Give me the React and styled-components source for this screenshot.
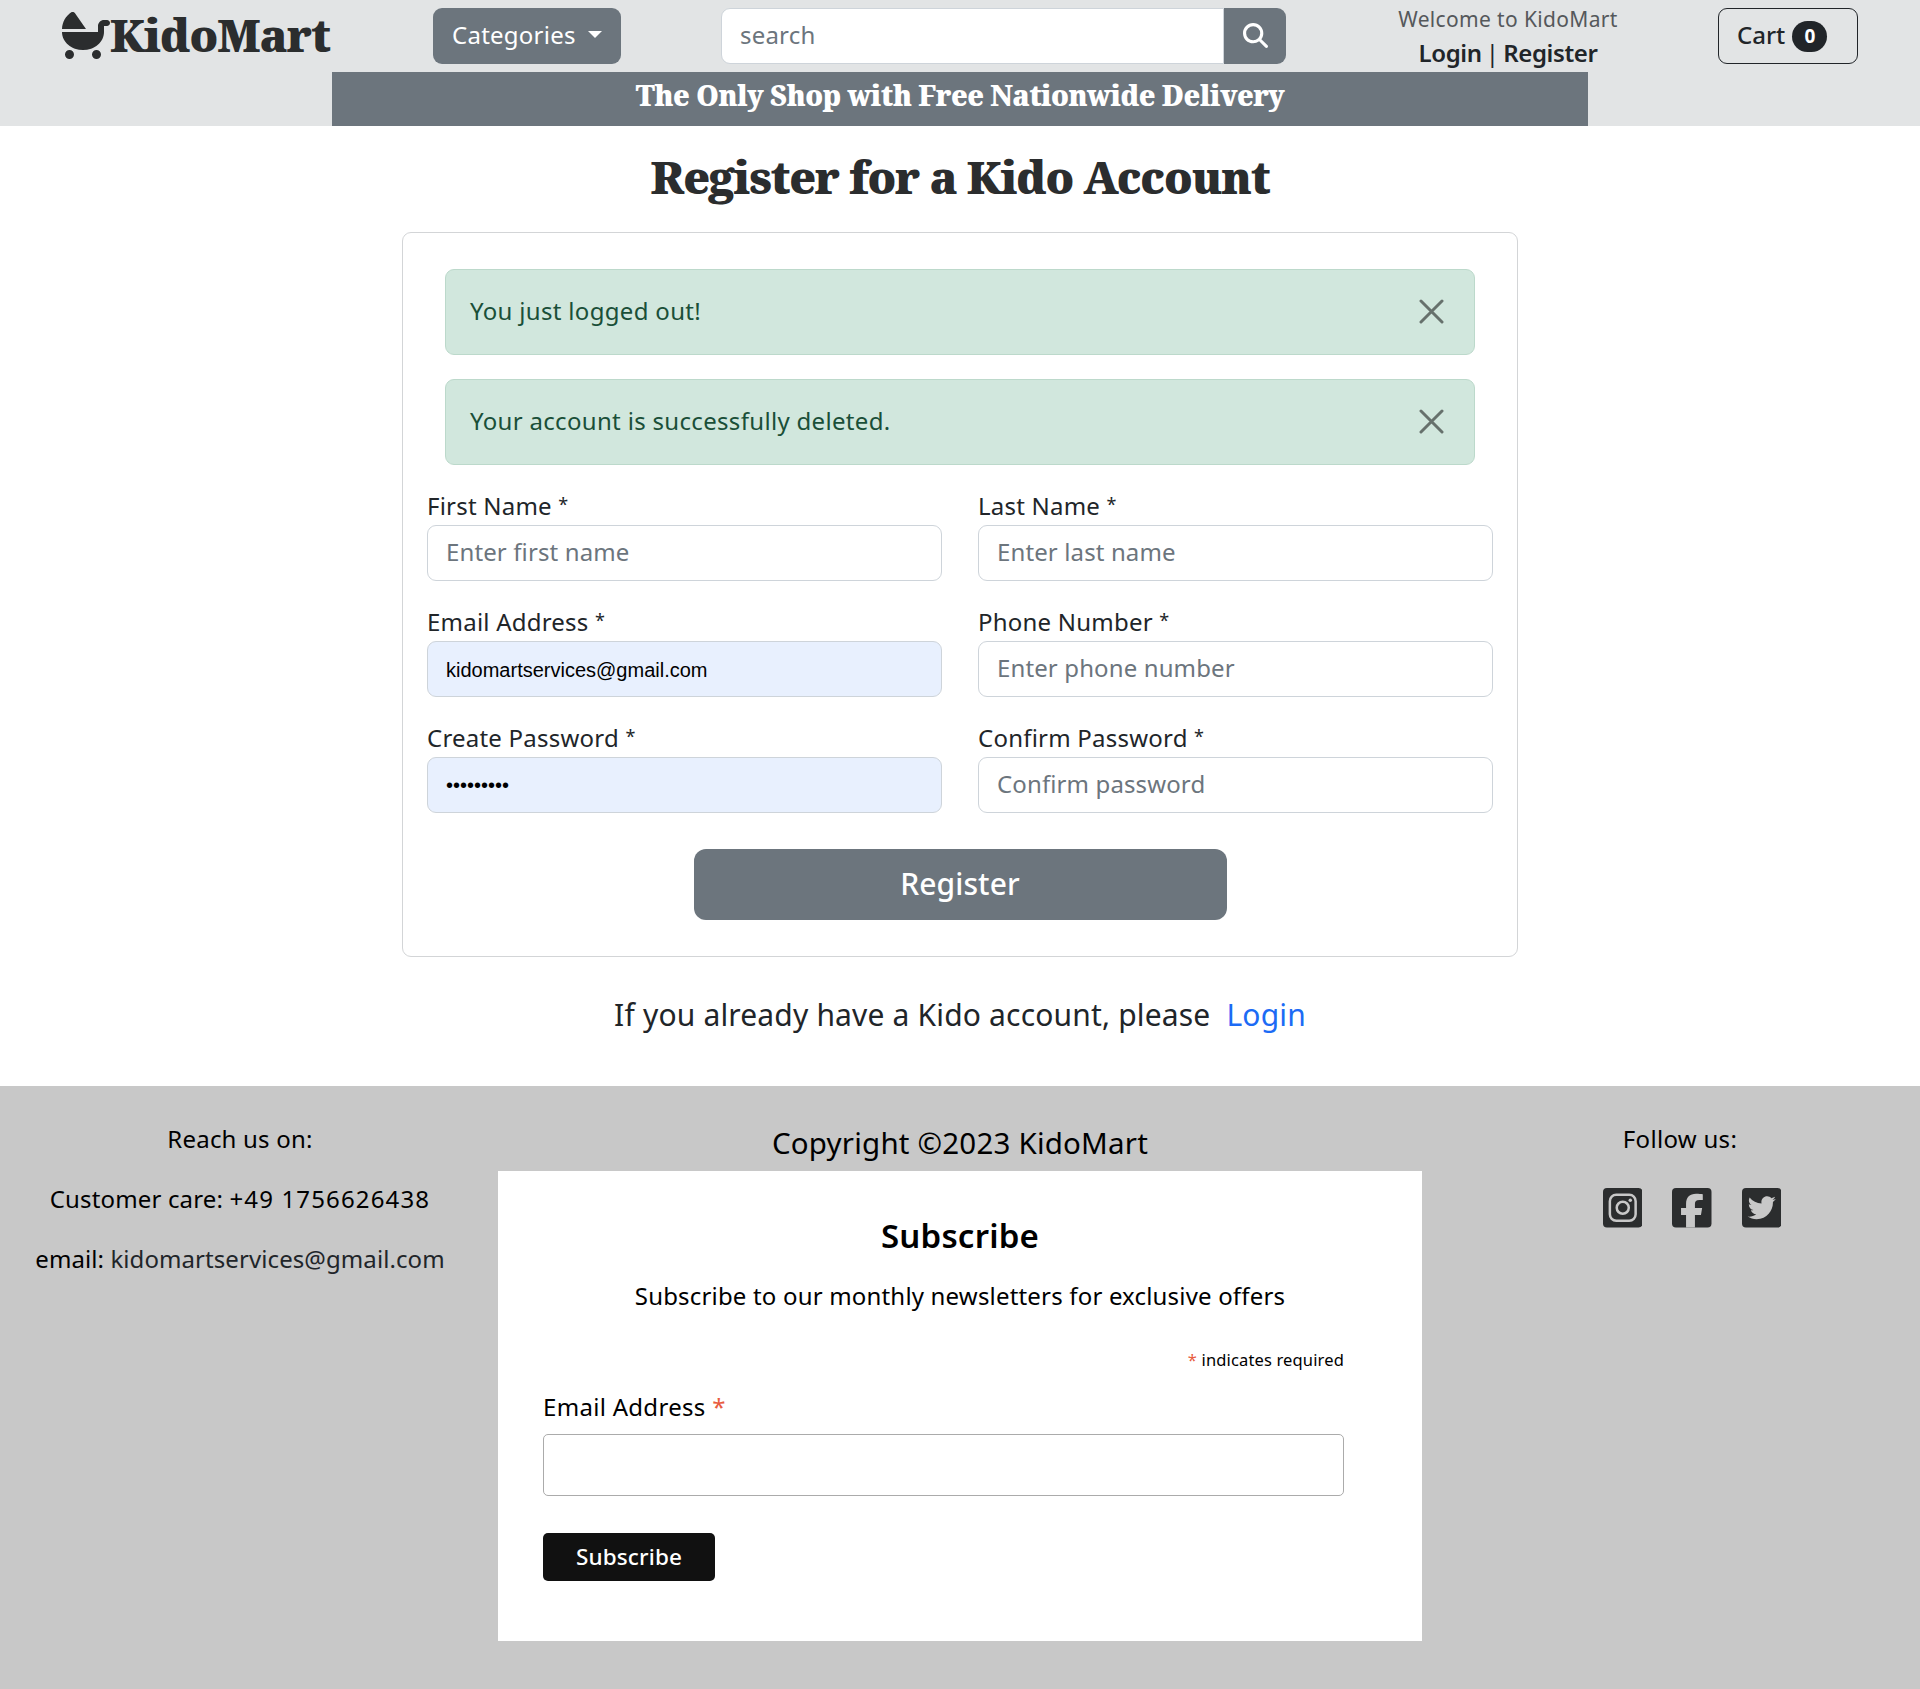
import React from "react";
import styled, { createGlobalStyle } from "styled-components";
import { FaBabyCarriage, FaMagnifyingGlass } from "react-icons/fa6";

const sans = `"Noto Sans", "Open Sans", sans-serif`;
const slab = `"Noto Serif", "DejaVu Serif", serif`;
const slate = "#6c757d";
const ink = "#212529";
const charcoal = "#2b2d2e";
const footerGrey = "#c8c8c8";

const GlobalStyle = createGlobalStyle`
  *, *::before, *::after { box-sizing: border-box; }
  body {
    margin: 0;
    font-family: ${sans};
    font-size: 24px;
    line-height: 36px;
    color: ${ink};
    background: #fff;
  }
  a { color: inherit; text-decoration: none; }
  p, h1, h2, h3 { margin: 0; }
  input, button { font-family: inherit; outline: none; }
`;

const Page = styled.div`
  min-height: 1689px;
  display: flex;
  flex-direction: column;
`;

/* ---------- header ---------- */

const Header = styled.header`
  height: 126px;
  background: #e2e4e5;
`;

const NavRow = styled.div`
  display: flex;
  align-items: flex-start;
  height: 72px;
  padding: 0 62px;
`;

const Brand = styled.a`
  display: flex;
  width: 371px;
  height: 72px;
  padding-top: 11px;
  color: ${charcoal};
  svg {
    width: 48px;
    height: 48px;
    flex: none;
  }
`;

const BrandName = styled.span`
  font: 900 45px/47px ${slab};
  letter-spacing: -1px;
`;

const CategoriesButton = styled.button`
  display: flex;
  align-items: center;
  width: 188px;
  height: 56px;
  margin: 8px 100px 0 0;
  padding: 0 0 3px 19px;
  border: 0;
  border-radius: 9px;
  background: ${slate};
  color: #fff;
  font-size: 24px;
  letter-spacing: 0.25px;
  &::after {
    content: "";
    margin: 0 0 0 12px;
    border: 7px solid transparent;
    border-top-color: #fff;
    border-bottom: 0;
  }
`;

const SearchGroup = styled.form`
  display: flex;
  width: 565px;
  height: 56px;
  margin-top: 8px;
`;

const SearchInput = styled.input`
  flex: 1;
  min-width: 0;
  padding: 0 18px 3px;
  border: 1px solid #ced4da;
  border-radius: 9px 0 0 9px;
  font-size: 24px;
  letter-spacing: 0.2px;
  &::placeholder { color: ${slate}; opacity: 1; }
`;

const SearchButton = styled.button`
  display: flex;
  align-items: center;
  justify-content: center;
  width: 62px;
  padding: 0 0 2px;
  border: 0;
  border-radius: 0 9px 9px 0;
  background: ${slate};
  color: #fff;
  font-size: 25px;
`;

const Account = styled.div`
  width: 420px;
  margin-left: 12px;
  padding-top: 6px;
  text-align: center;
`;

const Welcome = styled.p`
  font-size: 21px;
  line-height: 26px;
  letter-spacing: 0.35px;
  color: #55585b;
`;

const AccountLinks = styled.p`
  line-height: 42px;
  word-spacing: -2px;
  a {
    font-weight: 600;
    letter-spacing: -0.4px;
  }
`;

const CartButton = styled.a`
  display: flex;
  align-items: center;
  width: 140px;
  height: 56px;
  margin-top: 8px;
  padding-left: 18px;
  border: 1px solid ${ink};
  border-radius: 9px;
  font-weight: 500;
  span { margin-top: -2px; }
`;

const CartCount = styled.b`
  width: 35px;
  height: 31px;
  margin-left: 7px;
  border-radius: 16px;
  background: ${ink};
  color: #fff;
  font-size: 19px;
  line-height: 31px;
  text-align: center;
`;

const Tagline = styled.div`
  width: 1256px;
  height: 54px;
  margin: 0 auto;
  background: ${slate};
  color: #fff;
  font: 900 28px/47px ${slab};
  letter-spacing: -0.53px;
  text-align: center;
`;

/* ---------- registration ---------- */

const Main = styled.main`
  display: flex;
  flex-direction: column;
  align-items: center;
  height: 960px;
  padding-top: 21px;
`;

const Title = styled.h1`
  margin-bottom: 25px;
  color: ${charcoal};
  font: 900 45px/60px ${slab};
  letter-spacing: -1.27px;
  white-space: nowrap;
`;

const Card = styled.section`
  width: 1116px;
  height: 725px;
  padding: 36px 24px;
  border: 1px solid #d3d5d7;
  border-radius: 9px;
`;

const Alert = styled.div`
  display: flex;
  align-items: center;
  justify-content: space-between;
  height: 86px;
  margin: 0 18px 24px;
  padding: 0 30px 0 24px;
  border: 1px solid #bcd9cb;
  border-radius: 9px;
  background: #d1e7dd;
  color: #1a4f38;
  letter-spacing: 0.32px;
  span { margin-top: -3px; }
`;

const CloseIcon = styled.svg`
  width: 25px;
  height: 25px;
  margin-bottom: 1px;
  fill: none;
  stroke: #66716c;
  stroke-width: 3;
  stroke-linecap: round;
`;

const Fields = styled.div`
  display: grid;
  grid-template-columns: 515px 515px;
  gap: 24px 36px;
`;

const Label = styled.label`
  display: block;
  height: 36px;
  line-height: 33px;
  letter-spacing: ${(p) => p.$tracking || 0}px;
`;

const Star = styled.span`
  font-size: 18px;
  line-height: 0;
  vertical-align: 4px;
`;

const Input = styled.input`
  display: block;
  width: 100%;
  height: 56px;
  padding: ${(p) => (p.$autofilled ? "2px 18px 0" : "0 18px 3px")};
  border: 1px solid #ced4da;
  border-radius: 9px;
  background: ${(p) => (p.$autofilled ? "#e8f0fe" : "#fff")};
  color: ${(p) => (p.$autofilled ? "#000" : ink)};
  font-family: ${(p) => (p.$autofilled ? `"Liberation Sans", Arial, sans-serif` : sans)};
  font-size: ${(p) => (p.$autofilled ? 20 : 24)}px;
  letter-spacing: ${(p) => p.$tracking || 0}px;
  &::placeholder { color: ${slate}; opacity: 1; }
  &[type="password"] { padding-top: 0; }
`;

const RegisterButton = styled.button`
  display: block;
  width: 533px;
  height: 71px;
  margin: 36px auto 0;
  padding: 0 0 2px;
  border: 0;
  border-radius: 12px;
  background: ${slate};
  color: #fff;
  font-size: 30px;
  font-weight: 500;
  letter-spacing: 0.1px;
`;

const LoginPrompt = styled.p`
  margin-top: 35px;
  font-size: 30px;
  line-height: 46px;
  letter-spacing: 0.17px;
  a {
    margin-left: 16px;
    color: #1c6bf5;
  }
`;

/* ---------- footer ---------- */

const Footer = styled.footer`
  display: grid;
  grid-template-columns: 480px 960px 480px;
  flex: 1;
  padding-top: 35px;
  background: ${footerGrey};
  color: #000;
`;

const FooterColumn = styled.div`
  display: flex;
  flex-direction: column;
  align-items: center;
  gap: 24px;
`;

const FooterText = styled.p`
  letter-spacing: ${(p) => p.$tracking || 0}px;
  a { color: ${ink}; }
`;

const PhoneNumber = styled.span`
  letter-spacing: 1.15px;
`;

const SocialLinks = styled.div`
  display: flex;
  gap: 30px;
  margin: 7px 0 0 24px;
`;

const SocialIcon = styled.svg`
  display: block;
  width: 39.5px;
  height: 39.5px;
  fill: ${footerGrey};
  .tile { fill: ${charcoal}; }
  .ring { fill: none; stroke: ${footerGrey}; stroke-width: 7.5; }
`;

const FooterCenter = styled.div`
  padding: 0 18px;
`;

const Copyright = styled.p`
  height: 50px;
  font-size: 29.5px;
  line-height: 44px;
  letter-spacing: 0.2px;
  text-align: center;
`;

const Newsletter = styled.form`
  height: 470px;
  padding: 41px 78px 0 45px;
  background: #fff;
`;

const NewsletterTitle = styled.h2`
  margin: 0 -33px 18px 0;
  font-size: 33px;
  font-weight: 600;
  line-height: 48px;
  letter-spacing: 0.2px;
  text-align: center;
`;

const NewsletterLead = styled.p`
  margin-right: -33px;
  letter-spacing: 0.18px;
  text-align: center;
`;

const RequiredNote = styled.p`
  margin-top: 34px;
  font-size: 16.5px;
  line-height: 24px;
  letter-spacing: 0.15px;
  text-align: right;
`;

const RedStar = styled.span`
  color: #e85c41;
`;

const NewsletterLabel = styled.label`
  display: block;
  margin: 18px 0 10px;
  line-height: 34px;
  letter-spacing: 0.3px;
`;

const NewsletterInput = styled.input`
  display: block;
  width: 801px;
  height: 62px;
  padding: 0 12px;
  border: 1px solid #ababab;
  border-radius: 5px;
  background: #fff;
`;

const SubscribeButton = styled.button`
  width: 172px;
  height: 48px;
  margin-top: 37px;
  padding: 0 0 1px;
  border: 0;
  border-radius: 5px;
  background: #111;
  color: #fff;
  font-size: 22.5px;
  font-weight: 500;
  letter-spacing: 0.15px;
`;

const messages = ["You just logged out!", "Your account is successfully deleted."];

const fields = [
  { label: "First Name", placeholder: "Enter first name" },
  { label: "Last Name", placeholder: "Enter last name" },
  { label: "Email Address", value: "kidomartservices@gmail.com" },
  { label: "Phone Number", placeholder: "Enter phone number" },
  { label: "Create Password", value: "kidomart1", type: "password" },
  { label: "Confirm Password", placeholder: "Confirm password" },
];

function Tile() {
  return <rect className="tile" width="118" height="118" rx="12" />;
}

function InstagramIcon() {
  return (
    <SocialIcon viewBox="0 0 118 118">
      <Tile />
      <rect className="ring" x="20.5" y="20.5" width="77" height="77" rx="19" />
      <circle className="ring" cx="59" cy="59" r="18" />
      <circle cx="81.5" cy="36.5" r="5.2" />
    </SocialIcon>
  );
}

function FacebookIcon() {
  return (
    <SocialIcon viewBox="0 0 118 118">
      <Tile />
      <path d="M42 118V81H27V60H42V47C42 27 53 17 72 17C80 17 87 17.6 92 18.5V36H82C72 36 68.500 40 68.500 48V60H90L86.500 81H68.500V118Z" />
    </SocialIcon>
  );
}

function TwitterIcon() {
  return (
    <SocialIcon viewBox="0 0 118 118">
      <Tile />
      <path
        transform="translate(17 17) scale(0.164)"
        d="M459.37 151.716c.325 4.548.325 9.097.325 13.645 0 138.72-105.583 298.558-298.558 298.558-59.452 0-114.68-17.219-161.137-47.106 8.447.974 16.568 1.299 25.34 1.299 49.055 0 94.213-16.568 130.274-44.832-46.132-.975-84.792-31.188-98.112-72.772 6.498.974 12.995 1.624 19.818 1.624 9.421 0 18.843-1.3 27.614-3.573-48.081-9.747-84.143-51.98-84.143-102.985v-1.299c13.969 7.797 30.214 12.67 47.431 13.319-28.264-18.843-46.781-51.005-46.781-87.391 0-19.492 5.197-37.36 14.294-52.954 51.655 63.675 129.3 105.258 216.365 109.807-1.624-7.797-2.599-15.918-2.599-24.04 0-57.828 46.782-104.934 104.934-104.934 30.213 0 57.502 12.67 76.67 33.137 23.715-4.548 46.456-13.32 66.599-25.34-7.798 24.366-24.366 44.833-46.132 57.827 21.117-2.273 41.584-8.122 60.426-16.243-14.292 20.791-32.161 39.308-52.628 54.253z"
      />
    </SocialIcon>
  );
}

export default function App() {
  return (
    <Page>
      <GlobalStyle />
      <Header>
        <NavRow>
          <Brand href="#">
            <FaBabyCarriage />
            <BrandName>KidoMart</BrandName>
          </Brand>
          <CategoriesButton type="button">Categories</CategoriesButton>
          <SearchGroup>
            <SearchInput placeholder="search" />
            <SearchButton type="button" aria-label="search">
              <FaMagnifyingGlass />
            </SearchButton>
          </SearchGroup>
          <Account>
            <Welcome>Welcome to KidoMart</Welcome>
            <AccountLinks>
              <a href="#">Login</a> | <a href="#">Register</a>
            </AccountLinks>
          </Account>
          <CartButton href="#">
            <span>Cart</span>
            <CartCount>0</CartCount>
          </CartButton>
        </NavRow>
        <Tagline>The Only Shop with Free Nationwide Delivery</Tagline>
      </Header>

      <Main>
        <Title>Register for a Kido Account</Title>
        <Card>
          {messages.map((message) => (
            <Alert key={message}>
              <span>{message}</span>
              <CloseIcon viewBox="0 0 25 25">
                <path d="M2 2 23 23M23 2 2 23" />
              </CloseIcon>
            </Alert>
          ))}
          <Fields>
            {fields.map((field) => (
              <div key={field.label}>
                <Label $tracking={0.22}>
                  {field.label} <Star>*</Star>
                </Label>
                <Input
                  type={field.type || "text"}
                  placeholder={field.placeholder}
                  defaultValue={field.value}
                  $autofilled={Boolean(field.value)}
                  $tracking={field.value ? 0 : 0.12}
                />
              </div>
            ))}
          </Fields>
          <RegisterButton type="button">Register</RegisterButton>
        </Card>
        <LoginPrompt>
          If you already have a Kido account, please<a href="#">Login</a>
        </LoginPrompt>
      </Main>

      <Footer>
        <FooterColumn>
          <FooterText $tracking={0.2}>Reach us on:</FooterText>
          <FooterText $tracking={0.15}>
            Customer care: <PhoneNumber>+49 1756626438</PhoneNumber>
          </FooterText>
          <FooterText $tracking={0.08}>
            email: <a href="#">kidomartservices@gmail.com</a>
          </FooterText>
        </FooterColumn>
        <FooterCenter>
          <Copyright>Copyright ©2023 KidoMart</Copyright>
          <Newsletter>
            <NewsletterTitle>Subscribe</NewsletterTitle>
            <NewsletterLead>
              Subscribe to our monthly newsletters for exclusive offers
            </NewsletterLead>
            <RequiredNote>
              <RedStar>*</RedStar> indicates required
            </RequiredNote>
            <NewsletterLabel>
              Email Address <RedStar>*</RedStar>
            </NewsletterLabel>
            <NewsletterInput />
            <SubscribeButton type="button">Subscribe</SubscribeButton>
          </Newsletter>
        </FooterCenter>
        <FooterColumn>
          <FooterText $tracking={0.3}>Follow us:</FooterText>
          <SocialLinks>
            <InstagramIcon />
            <FacebookIcon />
            <TwitterIcon />
          </SocialLinks>
        </FooterColumn>
      </Footer>
    </Page>
  );
}
